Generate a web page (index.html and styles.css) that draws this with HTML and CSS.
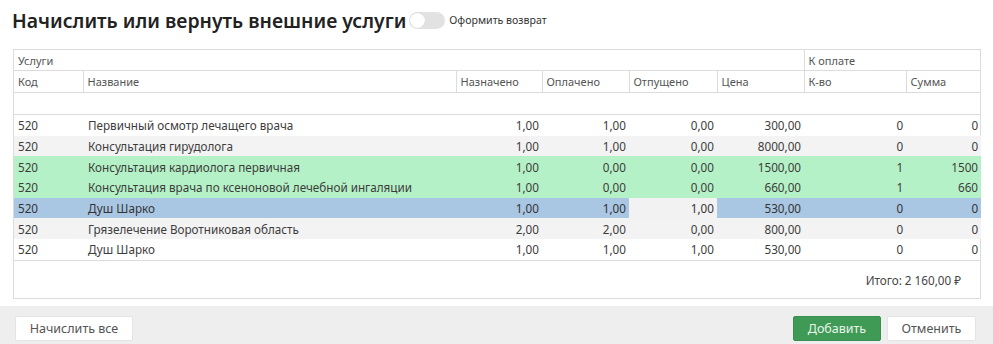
FILE: index.html
```html
<!DOCTYPE html>
<html lang="ru">
<head>
<meta charset="UTF-8">
<meta name="viewport" content="width=device-width, initial-scale=1.0">
<title>Начислить или вернуть внешние услуги</title>
<link rel="stylesheet" href="styles.css">
</head>
<body>
<div class="dialog">
    <div class="content">
        <div class="title-row">
            <h2>Начислить или вернуть внешние услуги</h2>
            <span class="toggle"><span class="knob"></span></span>
            <span class="toggle-label">Оформить возврат</span>
        </div>
        <div class="grid">
            <table>
                <colgroup>
                    <col style="width:69px">
                    <col style="width:373px">
                    <col style="width:86px">
                    <col style="width:87px">
                    <col style="width:88px">
                    <col style="width:87px">
                    <col style="width:102px">
                    <col style="width:75px">
                </colgroup>
                <thead>
                    <tr>
                        <th colspan="6">Услуги</th>
                        <th colspan="2">К оплате</th>
                    </tr>
                    <tr>
                        <th>Код</th>
                        <th>Название</th>
                        <th>Назначено</th>
                        <th>Оплачено</th>
                        <th>Отпущено</th>
                        <th>Цена</th>
                        <th>К-во</th>
                        <th>Сумма</th>
                    </tr>
                </thead>
                <tbody>
                    <tr class="filter"><td colspan="8"></td></tr>
                    <tr>
                        <td>520</td><td>Первичный осмотр лечащего врача</td>
                        <td class="num">1,00</td><td class="num">1,00</td><td class="num">0,00</td><td class="num">300,00</td>
                        <td class="num">0</td><td class="num">0</td>
                    </tr>
                    <tr class="odd">
                        <td>520</td><td>Консультация гирудолога</td>
                        <td class="num">1,00</td><td class="num">1,00</td><td class="num">0,00</td><td class="num">8000,00</td>
                        <td class="num">0</td><td class="num">0</td>
                    </tr>
                    <tr class="paid">
                        <td>520</td><td>Консультация кардиолога первичная</td>
                        <td class="num">1,00</td><td class="num">0,00</td><td class="num">0,00</td><td class="num">1500,00</td>
                        <td class="num">1</td><td class="num">1500</td>
                    </tr>
                    <tr class="paid">
                        <td>520</td><td>Консультация врача по ксеноновой лечебной ингаляции</td>
                        <td class="num">1,00</td><td class="num">0,00</td><td class="num">0,00</td><td class="num">660,00</td>
                        <td class="num">1</td><td class="num">660</td>
                    </tr>
                    <tr class="selected">
                        <td>520</td><td>Душ Шарко</td>
                        <td class="num">1,00</td><td class="num">1,00</td><td class="num editing">1,00</td><td class="num">530,00</td>
                        <td class="num">0</td><td class="num">0</td>
                    </tr>
                    <tr class="odd">
                        <td>520</td><td>Грязелечение Воротниковая область</td>
                        <td class="num">2,00</td><td class="num">2,00</td><td class="num">0,00</td><td class="num">800,00</td>
                        <td class="num">0</td><td class="num">0</td>
                    </tr>
                    <tr class="last">
                        <td>520</td><td>Душ Шарко</td>
                        <td class="num">1,00</td><td class="num">1,00</td><td class="num">1,00</td><td class="num">530,00</td>
                        <td class="num">0</td><td class="num">0</td>
                    </tr>
                </tbody>
            </table>
            <div class="total">Итого: 2 160,00 ₽</div>
        </div>
    </div>
    <div class="footer">
        <button class="btn wide">Начислить все</button>
        <div class="footer-right">
            <button class="btn primary">Добавить</button>
            <button class="btn">Отменить</button>
        </div>
    </div>
</div>
</body>
</html>
```

FILE: styles.css
```css
/* Basic styling */
body {
    font-family: "Noto Sans", "Open Sans", sans-serif;
    margin: 0;
    padding: 0;
    background: #fff;
    color: #444;
}
.dialog {
    width: 993px;
    height: 344px;
    display: flex;
    flex-direction: column;
}
.content {
    padding: 0 13px 0 12px;
    height: 306px;
    box-sizing: border-box;
}
.title-row {
    display: flex;
    align-items: center;
    height: 38px;
    padding-top: 1px;
    margin-bottom: 10px;
}
h2 {
    margin: 0;
    font-size: 19.4px;
    font-weight: 600;
    color: #222;
}
.toggle {
    width: 36px;
    height: 17px;
    border-radius: 9px;
    background: #e2e2e2;
    margin-left: 3px;
    display: flex;
    align-items: center;
    padding-left: 1px;
    box-sizing: border-box;
}
.knob {
    width: 15px;
    height: 15px;
    border-radius: 50%;
    background: #fff;
    box-shadow: 0 0 1px rgba(0,0,0,0.15);
}
.toggle-label {
    font-size: 10.6px;
    color: #333;
    margin-left: 4px;
}
.grid {
    border: 1px solid #dcdcdc;
    width: 968px;
    margin-left: 1px;
    box-sizing: border-box;
    height: 250px;
}
table {
    border-collapse: collapse;
    table-layout: fixed;
    width: 966px;
    font-size: 11.7px;
}
th {
    font-weight: normal;
    text-align: left;
    color: #555;
    height: 21px;
    padding: 0 4px;
    border-right: 1px solid #dcdcdc;
    border-bottom: 1px solid #dcdcdc;
    font-size: 11px;
}
th:last-child {
    border-right: none;
}
tr:first-child th {
    height: 20px;
}
td {
    height: 20.7px;
    padding: 0 4px;
    white-space: nowrap;
    overflow: hidden;
    color: #3c3c3c;
}
td:nth-child(2) {
    padding-left: 5px;
}
td.num {
    text-align: right;
    padding-right: 3px;
}
tr.filter td {
    height: 21px;
    border-bottom: 1px solid #dcdcdc;
}
tr.odd td {
    background: #f3f3f3;
}
tr.paid td {
    background: #b5f1c6;
}
tr.selected td {
    background: #a9c6e3;
    color: #333;
}
tr.selected td.editing {
    background: #f2f2f2;
}
tr.last td {
    border-bottom: 1px solid #dcdcdc;
}
.total {
    text-align: right;
    font-size: 11.7px;
    padding: 11px 19px 0 0;
    color: #444;
}
.footer {
    flex: 1;
    background: #eeeeee;
    display: flex;
    justify-content: space-between;
    align-items: flex-start;
    padding: 10px 17px 0 15px;
}
.footer-right {
    display: flex;
    gap: 6px;
}
.btn {
    font-family: "Noto Sans", "Open Sans", sans-serif;
    font-size: 12.5px;
    height: 25px;
    width: 89px;
    padding: 0;
    white-space: nowrap;
    background: #fff;
    color: #555;
    border: 1px solid #e4e4e4;
    border-radius: 2px;
    cursor: pointer;
}
.btn.wide {
    width: 118px;
}
.btn.primary {
    width: 88px;
    background: #3f9a56;
    border-color: #3a8f50;
    color: #e8f5ea;
}
```
